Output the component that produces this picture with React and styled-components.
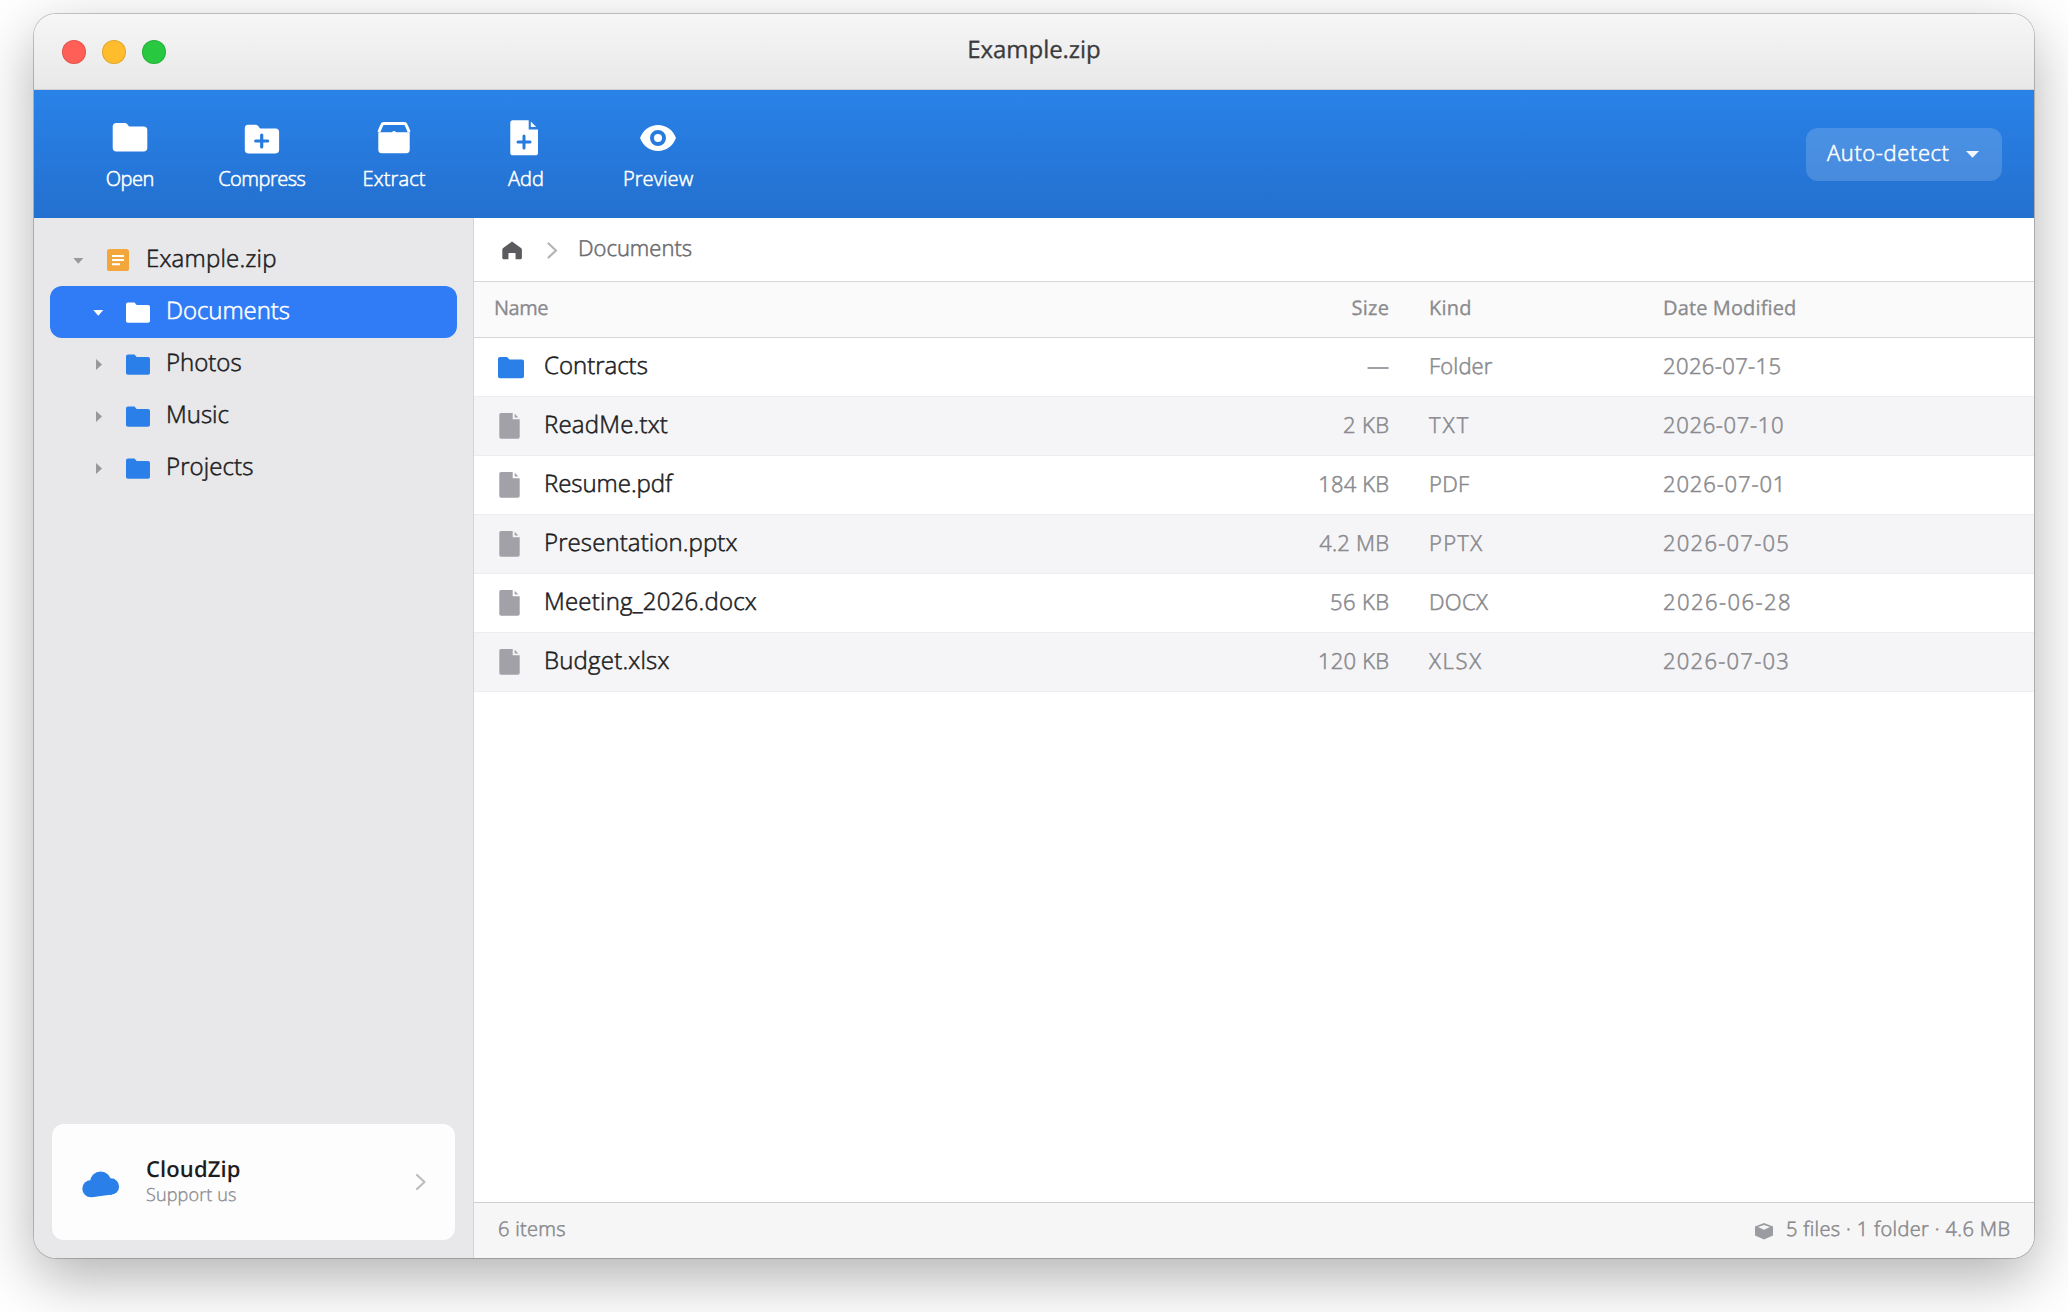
import React from "react";
import styled, { createGlobalStyle, css } from "styled-components";

const GlobalStyle = createGlobalStyle`
  * {
    box-sizing: border-box;
  }

  body {
    margin: 0;
    overflow: hidden;
    background: #fff;
    font-family: "Open Sans", "Noto Sans", sans-serif;
    font-weight: 300;
    text-rendering: geometricPrecision;
    -webkit-font-smoothing: antialiased;
  }
`;

const Page = styled.div`
  width: 2068px;
  height: 1312px;
  padding: 14px 34px 54px;
`;

const Window = styled.div`
  display: flex;
  flex-direction: column;
  width: 2000px;
  height: 1244px;
  border-radius: 22px;
  overflow: hidden;
  background: #fff;
  box-shadow: 0 0 0 1px rgba(0, 0, 0, 0.2), 0 20px 60px rgba(0, 0, 0, 0.31);
`;

// Light cut, thickened a little so it reads between light and regular
const Text = styled.span`
  display: block;
  line-height: 1.2;
  white-space: nowrap;
  padding-bottom: 2px;
  font-size: ${(p) => p.$size || 24}px;
  letter-spacing: ${(p) => p.$track || 0}px;
  margin-right: ${(p) => -(p.$track || 0)}px;
  color: ${(p) => p.$color || "#1d1d1f"};
  -webkit-text-stroke: 0.55px currentColor;

  ${(p) =>
    p.$medium &&
    css`
      font-weight: 400;
      -webkit-text-stroke: 0.3px currentColor;
    `}
`;

/* ---------- title bar ---------- */

const TitleBar = styled.header`
  display: grid;
  grid-template-columns: 1fr auto 1fr;
  align-items: center;
  height: 76px;
  flex: none;
  padding: 0 28px;
  background: linear-gradient(#f6f6f6, #e8e8e8);
  border-bottom: 1px solid #cfcfcf;
`;

const Lights = styled.div`
  display: flex;
  gap: 16px;
  padding-top: 1px;
`;

const Light = styled.span`
  width: 24px;
  height: 24px;
  border-radius: 50%;
  background: ${(p) => p.$color};
  box-shadow: inset 0 0 0 1px rgba(0, 0, 0, 0.12);
`;

/* ---------- toolbar ---------- */

const Toolbar = styled.nav`
  display: flex;
  align-items: center;
  height: 128px;
  flex: none;
  padding: 0 32px 0 30px;
  background: linear-gradient(#2a82e8, #2370cf);
`;

const Tool = styled.button`
  display: flex;
  flex-direction: column;
  align-items: center;
  gap: 9px;
  width: 132px;
  padding: 0;
  border: 0;
  background: none;
  font: inherit;

  ${Text} {
    padding: 0;
    margin-bottom: -1px;
  }
`;

const ToolIcon = styled.svg`
  width: 40px;
  height: 40px;
  fill: #fff;
`;

const FormatSelect = styled.button`
  display: flex;
  align-items: center;
  justify-content: space-between;
  width: 196px;
  height: 53px;
  margin-left: auto;
  padding: 0 23px 0 21px;
  border: 0;
  border-radius: 12px;
  background: rgba(255, 255, 255, 0.16);
  font: inherit;

  ${Text} {
    padding-bottom: 4px;
  }
`;

/* ---------- sidebar ---------- */

const Body = styled.div`
  display: flex;
  flex: 1;
  min-height: 0;
`;

const Sidebar = styled.aside`
  display: flex;
  flex-direction: column;
  justify-content: space-between;
  width: 440px;
  flex: none;
  padding: 16px 16px 18px;
  background: #e8e8ea;
  border-right: 1px solid #d5d5d7;
`;

const Tree = styled.div`
  display: flex;
  flex-direction: column;
`;

const TreeRow = styled.div`
  display: flex;
  align-items: center;
  height: 52px;
  padding-left: ${(p) => 16 + p.$depth * 20}px;
  border-radius: 12px;
  background: ${(p) => (p.$active ? "#2f7cf6" : "transparent")};
`;

const Caret = styled.svg`
  width: 24px;
  height: 24px;
  margin-right: 16px;
  flex: none;
  fill: ${(p) => (p.$active ? "#fff" : "#98989a")};
`;

const TreeIcon = styled.svg`
  width: 24px;
  height: 24px;
  margin-right: 16px;
  flex: none;
`;

const Promo = styled.div`
  display: flex;
  align-items: center;
  height: 116px;
  margin: 0 2px;
  padding: 0 27px 0 28px;
  border-radius: 12px;
  background: #fdfdfd;
`;

const PromoText = styled.div`
  flex: 1;
  padding: 0 0 2px 26px;
`;

const PromoTitle = styled(Text)`
  line-height: 29px;
  padding: 0;
  font-weight: 600;
  -webkit-text-stroke: 0;
`;

const PromoNote = styled(Text)`
  line-height: 23px;
  padding: 0;
  -webkit-text-stroke-width: 0.35px;
`;

/* ---------- file list ---------- */

const Main = styled.main`
  display: flex;
  flex-direction: column;
  flex: 1;
`;

const Breadcrumb = styled.div`
  display: flex;
  align-items: center;
  height: 64px;
  padding-left: 26px;
  border-bottom: 1px solid #d6d6d8;

  svg {
    margin-top: 2px;
  }
`;

const HomeIcon = styled.svg`
  width: 24px;
  height: 24px;
  margin-right: 20px;
  fill: #5a5a5f;
`;

const Chevron = styled.svg`
  width: 16px;
  height: 20px;
  fill: none;
  stroke: ${(p) => p.$color};
  stroke-width: 2.2;
  stroke-linecap: round;
  stroke-linejoin: round;
`;

const CrumbChevron = styled(Chevron)`
  margin-right: 18px;
`;

const Row = styled.div`
  display: grid;
  grid-template-columns: 1fr 160px 194px 351px;
  column-gap: 40px;
  align-items: center;
  height: 59px;
  padding: 0 20px;
  border-bottom: 1px solid #ededef;
  background: ${(p) => (p.$striped ? "#f5f5f7" : "#fff")};

  > :nth-child(2) {
    justify-self: end;
  }
`;

const HeaderRow = styled(Row)`
  height: 56px;
  background: #fafafa;
  border-bottom-color: #d6d6d8;

  ${Text} {
    padding-bottom: 4px;
  }
`;

const NameCell = styled.div`
  display: flex;
  align-items: center;
  gap: 20px;
  padding-left: 4px;
`;

const FileIcon = styled.svg`
  width: 26px;
  height: 28px;
  flex: none;
`;

const StatusBar = styled.footer`
  display: flex;
  align-items: center;
  justify-content: space-between;
  height: 56px;
  margin-top: auto;
  padding: 0 24px;
  background: #f6f6f6;
  border-top: 1px solid #cfcfd3;

  ${Text} {
    padding-bottom: 4px;
  }
`;

const Summary = styled.div`
  display: flex;
  align-items: center;
  gap: 13px;
`;

const TOOLS = [
  {
    label: "Open",
    track: -0.5,
    icon: (
      <path d="M6.2 5h8.6c1 0 1.7.3 2.3 1l2 2.4h14.700c2 0 3.500 1.500 3.500 3.500v18c0 2-1.500 3.500-3.500 3.500H6.200c-2 0-3.500-1.500-3.500-3.500V8.500C2.700 6.500 4.200 5 6.200 5z" />
    ),
  },
  {
    label: "Compress",
    track: -0.5,
    icon: (
      <>
        <path d="M6 6.700h7.600c1 0 1.700.3 2.300 1l2.300 2.700h15.600c2 0 3.300 1.300 3.300 3.300v18.400c0 2-1.300 3.300-3.300 3.300H6c-2 0-3.200-1.300-3.200-3.300V10c0-2 1.200-3.300 3.200-3.300z" />
        <path d="M19.700 17v12M13.700 23h12" stroke="#277bdf" strokeWidth="3.200" strokeLinecap="round" />
      </>
    ),
  },
  {
    label: "Extract",
    track: 0.1,
    icon: (
      <>
        <path d="M4.800 14l3-7c.4-1 1-1.500 2-1.500h20.400c1 0 1.600.5 2 1.500l3 7" fill="none" stroke="#fff" strokeWidth="3" />
        <path d="M4.300 14.300h13.200c1-.2 1.300-1.200 2.500-1.200s1.500 1 2.500 1.200h13.200v17.800c0 2-1.200 3.200-3.200 3.200h-25c-2 0-3.200-1.200-3.200-3.200z" />
      </>
    ),
  },
  {
    label: "Add",
    track: 0,
    icon: (
      <>
        <path d="M6.800 2.300h15.900v9.300H32v23.300c0 1.500-.9 2.400-2.400 2.400H6.800c-1.500 0-2.500-.9-2.500-2.400V4.700c0-1.500 1-2.400 2.500-2.400z" />
        <path d="M24.800 3.500l5.400 5.500h-5.400z" />
        <path d="M18 18v12M12 24h12" stroke="#277bdf" strokeWidth="3" strokeLinecap="round" />
      </>
    ),
  },
  {
    label: "Preview",
    track: 0.1,
    icon: (
      <>
        <path d="M20 7c8.200 0 14.800 5 18 13-3.200 8-9.800 13-18 13S5.200 28 2 20C5.200 12 11.800 7 20 7z" />
        <circle cx="20" cy="20" r="6" fill="none" stroke="#277bdf" strokeWidth="4" />
      </>
    ),
  },
];

const TREE = [
  { label: "Example.zip", depth: 0, open: true, archive: true, track: 0.2 },
  { label: "Documents", depth: 1, open: true, active: true, track: -0.05 },
  { label: "Photos", depth: 1 },
  { label: "Music", depth: 1 },
  { label: "Projects", depth: 1, track: 0.1 },
];

// Each cell is [text, tracking]
const FILES = [
  { name: ["Contracts", 0], size: ["—", 1], kind: ["Folder", 0.15], date: ["2026-07-15", 0.38], folder: true },
  { name: ["ReadMe.txt", 0.2], size: ["2 KB", 0.4], kind: ["TXT", 2.2], date: ["2026-07-10", 0.66] },
  { name: ["Resume.pdf", -0.05], size: ["184 KB", 0.15], kind: ["PDF", 0.3], date: ["2026-07-01", 0.86] },
  { name: ["Presentation.pptx", 0.1], size: ["4.2 MB", 0.2], kind: ["PPTX", 1.3], date: ["2026-07-05", 1.25] },
  { name: ["Meeting_2026.docx", 0.22], size: ["56 KB", 0.4], kind: ["DOCX", 0.3], date: ["2026-06-28", 1.45] },
  { name: ["Budget.xlsx", 0.2], size: ["120 KB", 0.2], kind: ["XLSX", 1.7], date: ["2026-07-03", 1.25] },
];

const COLUMNS = [
  ["Name", -0.5],
  ["Size", 0.3],
  ["Kind", 0.2],
  ["Date Modified", 0.13],
];

const FolderShape = ({ color }) => (
  <path
    fill={color}
    d="M2 2.500h6.500l2.200 2.500H22c1.200 0 2 .8 2 2v13.800c0 1.200-.8 2-2 2H2c-1.200 0-2-.8-2-2V4.500c0-1.200.8-2 2-2z"
  />
);

const ArchiveShape = () => (
  <>
    <rect x="1" y="1" width="22" height="22" rx="2.600" fill="#f2a63b" />
    <path d="M6 8h12M6 12h12M6 16.200h8" stroke="#fff" strokeWidth="2" />
  </>
);

const CloudIcon = () => (
  <svg width="40" height="40" viewBox="0 0 40 40" fill="#2a80e8">
    <circle cx="11" cy="26.600" r="8.700" />
    <circle cx="20.600" cy="19.900" r="10.500" />
    <circle cx="30.900" cy="24.500" r="8.200" />
    <path d="M11 20h20l1 12.600-20.200 2.700z" />
  </svg>
);

const PackageIcon = () => (
  <svg width="18" height="18" viewBox="0 0 18 18" fill="#9b9ba2">
    <path d="M9 1l9 3.400v9.200L9 17.400 0 13.600V4.400z" />
    <path d="M3 5l6-2.100L15 5 9 7.800z" fill="#f6f6f6" />
  </svg>
);

const App = () => {
  return (
    <Page>
      <GlobalStyle />
      <Window>
        <TitleBar>
          <Lights>
            <Light $color="#ff5f57" />
            <Light $color="#ffbd2e" />
            <Light $color="#28c840" />
          </Lights>
          <Text $medium $color="#3a3a3c" $track={-0.05}>
            Example.zip
          </Text>
        </TitleBar>

        <Toolbar>
          {TOOLS.map((tool) => (
            <Tool key={tool.label}>
              <ToolIcon viewBox="0 0 40 40">{tool.icon}</ToolIcon>
              <Text $size={20} $track={tool.track} $color="#fff">
                {tool.label}
              </Text>
            </Tool>
          ))}
          <FormatSelect>
            <Text $size={22} $track={0.6} $color="#fff">
              Auto-detect
            </Text>
            <svg width="13" height="7" viewBox="0 0 13 7" fill="#f2f7fd">
              <path d="M0 0h13L6.500 6.700z" />
            </svg>
          </FormatSelect>
        </Toolbar>

        <Body>
          <Sidebar>
            <Tree>
              {TREE.map((node) => (
                <TreeRow key={node.label} $depth={node.depth} $active={node.active}>
                  <Caret viewBox="0 0 24 24" $active={node.active}>
                    <path d={node.open ? "M7.300 10h10l-5 5.800z" : "M10 7v11l6-5.500z"} />
                  </Caret>
                  <TreeIcon viewBox="0 0 24 24">
                    {node.archive ? <ArchiveShape /> : <FolderShape color={node.active ? "#fff" : "#2a80e8"} />}
                  </TreeIcon>
                  <Text $track={node.track} $color={node.active ? "#fff" : undefined}>
                    {node.label}
                  </Text>
                </TreeRow>
              ))}
            </Tree>

            <Promo>
              <CloudIcon />
              <PromoText>
                <PromoTitle $size={22} $track={0.1}>
                  CloudZip
                </PromoTitle>
                <PromoNote $size={18} $track={0.15} $color="#8a8a8e">
                  Support us
                </PromoNote>
              </PromoText>
              <Chevron viewBox="0 0 16 20" $color="#bdbdc1">
                <path d="M5 3l7.500 7L5 17" />
              </Chevron>
            </Promo>
          </Sidebar>

          <Main>
            <Breadcrumb>
              <HomeIcon viewBox="0 0 24 24">
                <path d="M12 2.500l9 6.600c.6.400.9 1 .9 1.700v8c0 .9-.6 1.500-1.500 1.500h-4.800v-5.500c0-.5-.3-.8-.8-.8H9.200c-.5 0-.8.300-.8.800v5.500H3.800c-.9 0-1.500-.6-1.500-1.500v-8c0-.7.300-1.300.9-1.700z" />
              </HomeIcon>
              <CrumbChevron viewBox="0 0 16 20" $color="#b3b3b8">
                <path d="M4.500 2.500l7.500 7-7.500 7" />
              </CrumbChevron>
              <Text $size={22} $color="#6c6c70">
                Documents
              </Text>
            </Breadcrumb>

            <HeaderRow>
              {COLUMNS.map(([label, track]) => (
                <Text key={label} $size={20} $medium $track={track} $color="#8a8a8e">
                  {label}
                </Text>
              ))}
            </HeaderRow>

            {FILES.map(({ name, size, kind, date, folder }, i) => (
              <Row key={name[0]} $striped={i % 2 === 1}>
                <NameCell>
                  <FileIcon viewBox="0 0 26 28">
                    {folder ? (
                      <path
                        fill="#2a80e8"
                        d="M2 4h7l2.500 2.600H24c1.200 0 2 .8 2 2v14.700c0 1.200-.8 2-2 2H2c-1.200 0-2-.8-2-2V6c0-1.200.8-2 2-2z"
                      />
                    ) : (
                      <g fill="#a1a1a7">
                        <path d="M3 1h11.700v6.300h7v17.400c0 1.200-.7 2-1.900 2H3.200c-1.200 0-1.900-.8-1.900-2V3c0-1.200.7-2 1.700-2z" />
                        <path d="M16.700 1.800l3.600 3.800h-3.600z" />
                      </g>
                    )}
                  </FileIcon>
                  <Text $track={name[1]}>{name[0]}</Text>
                </NameCell>
                {[size, kind, date].map(([value, track]) => (
                  <Text key={value} $size={22} $track={track} $color="#8a8a8e">
                    {value}
                  </Text>
                ))}
              </Row>
            ))}

            <StatusBar>
              <Text $size={20} $track={0.3} $color="#8a8a8e">
                6 items
              </Text>
              <Summary>
                <PackageIcon />
                <Text $size={20} $track={0.37} $color="#8a8a8e">
                  5 files · 1 folder · 4.6 MB
                </Text>
              </Summary>
            </StatusBar>
          </Main>
        </Body>
      </Window>
    </Page>
  );
};

export default App;
